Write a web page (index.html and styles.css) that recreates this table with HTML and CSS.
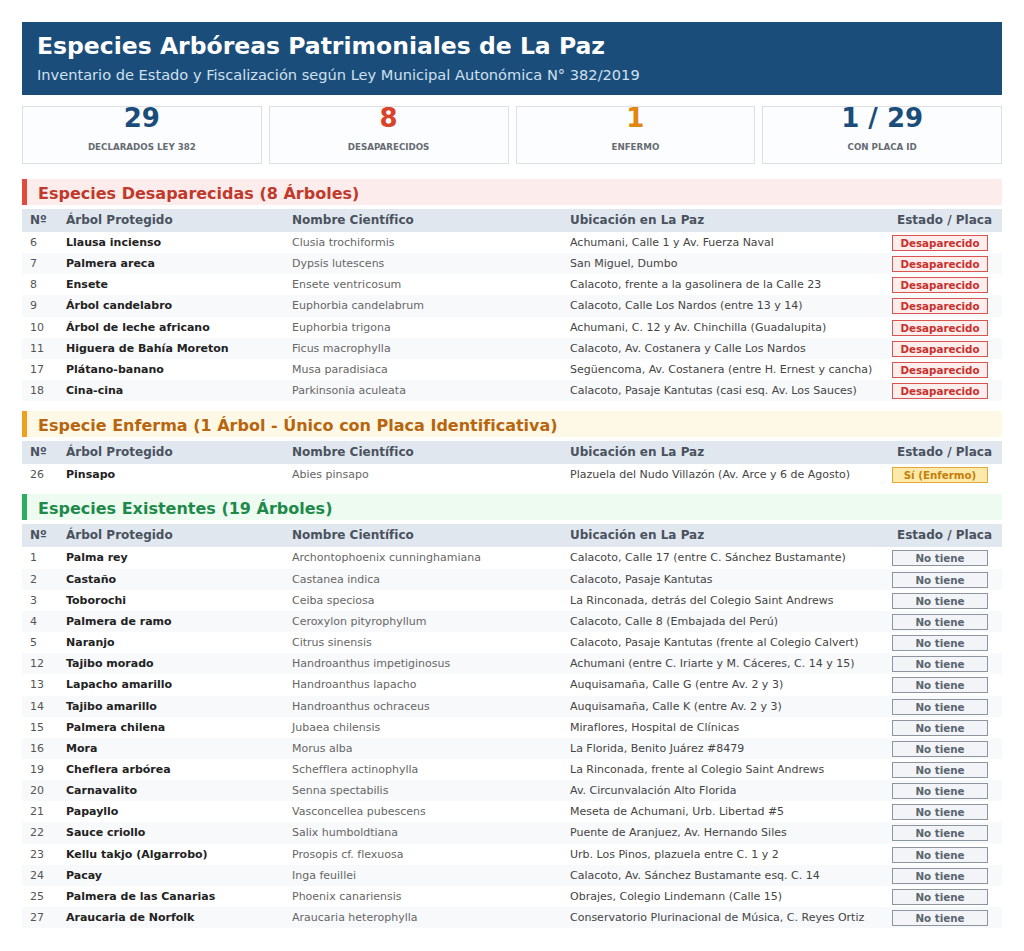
FILE: index.html
```html
<!DOCTYPE html>
<html lang="es">
<head>
<meta charset="utf-8">
<title>Especies Arbóreas Patrimoniales de La Paz</title>
<link rel="stylesheet" href="styles.css">
</head>
<body>
<div class="page">
  <header class="masthead">
    <h1 class="masthead-title">Especies Arbóreas Patrimoniales de La Paz</h1>
    <p class="masthead-sub">Inventario de Estado y Fiscalización según Ley Municipal Autonómica N° 382/2019</p>
  </header>

  <div class="stats">
    <div class="stat"><div class="stat-num num-blue">29</div><div class="stat-label">Declarados Ley 382</div></div>
    <div class="stat"><div class="stat-num num-red">8</div><div class="stat-label">Desaparecidos</div></div>
    <div class="stat"><div class="stat-num num-orange">1</div><div class="stat-label">Enfermo</div></div>
    <div class="stat"><div class="stat-num num-blue">1 / 29</div><div class="stat-label">Con Placa ID</div></div>
  </div>

  <section class="group">
    <h2 class="group-title title-red">Especies Desaparecidas (8 Árboles)</h2>
    <table class="trees">
      <colgroup><col class="c-num"><col class="c-name"><col class="c-sci"><col class="c-loc"><col class="c-state"></colgroup>
      <thead><tr><th>Nº</th><th>Árbol Protegido</th><th>Nombre Científico</th><th>Ubicación en La Paz</th><th class="th-state">Estado / Placa</th></tr></thead>
      <tbody>
        <tr><td class="num">6</td><td class="name">Llausa incienso</td><td class="sci">Clusia trochiformis</td><td class="loc">Achumani, Calle 1 y Av. Fuerza Naval</td><td class="state"><span class="badge b-red">Desaparecido</span></td></tr>
        <tr><td class="num">7</td><td class="name">Palmera areca</td><td class="sci">Dypsis lutescens</td><td class="loc">San Miguel, Dumbo</td><td class="state"><span class="badge b-red">Desaparecido</span></td></tr>
        <tr><td class="num">8</td><td class="name">Ensete</td><td class="sci">Ensete ventricosum</td><td class="loc">Calacoto, frente a la gasolinera de la Calle 23</td><td class="state"><span class="badge b-red">Desaparecido</span></td></tr>
        <tr><td class="num">9</td><td class="name">Árbol candelabro</td><td class="sci">Euphorbia candelabrum</td><td class="loc">Calacoto, Calle Los Nardos (entre 13 y 14)</td><td class="state"><span class="badge b-red">Desaparecido</span></td></tr>
        <tr><td class="num">10</td><td class="name">Árbol de leche africano</td><td class="sci">Euphorbia trigona</td><td class="loc">Achumani, C. 12 y Av. Chinchilla (Guadalupita)</td><td class="state"><span class="badge b-red">Desaparecido</span></td></tr>
        <tr><td class="num">11</td><td class="name">Higuera de Bahía Moreton</td><td class="sci">Ficus macrophylla</td><td class="loc">Calacoto, Av. Costanera y Calle Los Nardos</td><td class="state"><span class="badge b-red">Desaparecido</span></td></tr>
        <tr><td class="num">17</td><td class="name">Plátano-banano</td><td class="sci">Musa paradisiaca</td><td class="loc">Següencoma, Av. Costanera (entre H. Ernest y cancha)</td><td class="state"><span class="badge b-red">Desaparecido</span></td></tr>
        <tr><td class="num">18</td><td class="name">Cina-cina</td><td class="sci">Parkinsonia aculeata</td><td class="loc">Calacoto, Pasaje Kantutas (casi esq. Av. Los Sauces)</td><td class="state"><span class="badge b-red">Desaparecido</span></td></tr>
      </tbody>
    </table>
  </section>

  <section class="group">
    <h2 class="group-title title-orange">Especie Enferma (1 Árbol - Único con Placa Identificativa)</h2>
    <table class="trees">
      <colgroup><col class="c-num"><col class="c-name"><col class="c-sci"><col class="c-loc"><col class="c-state"></colgroup>
      <thead><tr><th>Nº</th><th>Árbol Protegido</th><th>Nombre Científico</th><th>Ubicación en La Paz</th><th class="th-state">Estado / Placa</th></tr></thead>
      <tbody>
        <tr><td class="num">26</td><td class="name">Pinsapo</td><td class="sci">Abies pinsapo</td><td class="loc">Plazuela del Nudo Villazón (Av. Arce y 6 de Agosto)</td><td class="state"><span class="badge b-yellow">Sí (Enfermo)</span></td></tr>
      </tbody>
    </table>
  </section>

  <section class="group">
    <h2 class="group-title title-green">Especies Existentes (19 Árboles)</h2>
    <table class="trees">
      <colgroup><col class="c-num"><col class="c-name"><col class="c-sci"><col class="c-loc"><col class="c-state"></colgroup>
      <thead><tr><th>Nº</th><th>Árbol Protegido</th><th>Nombre Científico</th><th>Ubicación en La Paz</th><th class="th-state">Estado / Placa</th></tr></thead>
      <tbody>
        <tr><td class="num">1</td><td class="name">Palma rey</td><td class="sci">Archontophoenix cunninghamiana</td><td class="loc">Calacoto, Calle 17 (entre C. Sánchez Bustamante)</td><td class="state"><span class="badge b-gray">No tiene</span></td></tr>
        <tr><td class="num">2</td><td class="name">Castaño</td><td class="sci">Castanea indica</td><td class="loc">Calacoto, Pasaje Kantutas</td><td class="state"><span class="badge b-gray">No tiene</span></td></tr>
        <tr><td class="num">3</td><td class="name">Toborochi</td><td class="sci">Ceiba speciosa</td><td class="loc">La Rinconada, detrás del Colegio Saint Andrews</td><td class="state"><span class="badge b-gray">No tiene</span></td></tr>
        <tr><td class="num">4</td><td class="name">Palmera de ramo</td><td class="sci">Ceroxylon pityrophyllum</td><td class="loc">Calacoto, Calle 8 (Embajada del Perú)</td><td class="state"><span class="badge b-gray">No tiene</span></td></tr>
        <tr><td class="num">5</td><td class="name">Naranjo</td><td class="sci">Citrus sinensis</td><td class="loc">Calacoto, Pasaje Kantutas (frente al Colegio Calvert)</td><td class="state"><span class="badge b-gray">No tiene</span></td></tr>
        <tr><td class="num">12</td><td class="name">Tajibo morado</td><td class="sci">Handroanthus impetiginosus</td><td class="loc">Achumani (entre C. Iriarte y M. Cáceres, C. 14 y 15)</td><td class="state"><span class="badge b-gray">No tiene</span></td></tr>
        <tr><td class="num">13</td><td class="name">Lapacho amarillo</td><td class="sci">Handroanthus lapacho</td><td class="loc">Auquisamaña, Calle G (entre Av. 2 y 3)</td><td class="state"><span class="badge b-gray">No tiene</span></td></tr>
        <tr><td class="num">14</td><td class="name">Tajibo amarillo</td><td class="sci">Handroanthus ochraceus</td><td class="loc">Auquisamaña, Calle K (entre Av. 2 y 3)</td><td class="state"><span class="badge b-gray">No tiene</span></td></tr>
        <tr><td class="num">15</td><td class="name">Palmera chilena</td><td class="sci">Jubaea chilensis</td><td class="loc">Miraflores, Hospital de Clínicas</td><td class="state"><span class="badge b-gray">No tiene</span></td></tr>
        <tr><td class="num">16</td><td class="name">Mora</td><td class="sci">Morus alba</td><td class="loc">La Florida, Benito Juárez #8479</td><td class="state"><span class="badge b-gray">No tiene</span></td></tr>
        <tr><td class="num">19</td><td class="name">Cheflera arbórea</td><td class="sci">Schefflera actinophylla</td><td class="loc">La Rinconada, frente al Colegio Saint Andrews</td><td class="state"><span class="badge b-gray">No tiene</span></td></tr>
        <tr><td class="num">20</td><td class="name">Carnavalito</td><td class="sci">Senna spectabilis</td><td class="loc">Av. Circunvalación Alto Florida</td><td class="state"><span class="badge b-gray">No tiene</span></td></tr>
        <tr><td class="num">21</td><td class="name">Papayllo</td><td class="sci">Vasconcellea pubescens</td><td class="loc">Meseta de Achumani, Urb. Libertad #5</td><td class="state"><span class="badge b-gray">No tiene</span></td></tr>
        <tr><td class="num">22</td><td class="name">Sauce criollo</td><td class="sci">Salix humboldtiana</td><td class="loc">Puente de Aranjuez, Av. Hernando Siles</td><td class="state"><span class="badge b-gray">No tiene</span></td></tr>
        <tr><td class="num">23</td><td class="name">Kellu takjo (Algarrobo)</td><td class="sci">Prosopis cf. flexuosa</td><td class="loc">Urb. Los Pinos, plazuela entre C. 1 y 2</td><td class="state"><span class="badge b-gray">No tiene</span></td></tr>
        <tr><td class="num">24</td><td class="name">Pacay</td><td class="sci">Inga feuillei</td><td class="loc">Calacoto, Av. Sánchez Bustamante esq. C. 14</td><td class="state"><span class="badge b-gray">No tiene</span></td></tr>
        <tr><td class="num">25</td><td class="name">Palmera de las Canarias</td><td class="sci">Phoenix canariensis</td><td class="loc">Obrajes, Colegio Lindemann (Calle 15)</td><td class="state"><span class="badge b-gray">No tiene</span></td></tr>
        <tr><td class="num">27</td><td class="name">Araucaria de Norfolk</td><td class="sci">Araucaria heterophylla</td><td class="loc">Conservatorio Plurinacional de Música, C. Reyes Ortiz</td><td class="state"><span class="badge b-gray">No tiene</span></td></tr>
      </tbody>
    </table>
  </section>
</div>
</body>
</html>
```

FILE: styles.css
```css
* { box-sizing: border-box; }

html, body {
  margin: 0;
  padding: 0;
  background: #ffffff;
}

body {
  font-family: "DejaVu Sans", Verdana, sans-serif;
  color: #333;
}

.page {
  padding: 22px 22px 0 22px;
}

/* Masthead */
.masthead {
  background: #1b4d7a;
  padding: 10px 15px 10px 15px;
  height: 73px;
}

.masthead-title {
  margin: 0;
  font-size: 23.5px;
  line-height: 29px;
  font-weight: bold;
  color: #ffffff;
}

.masthead-sub {
  margin: 5px 0 0 0;
  font-size: 14.6px;
  line-height: 18px;
  color: #cfe0f0;
}

/* Stat cards */
.stats {
  display: grid;
  grid-template-columns: repeat(4, 1fr);
  gap: 7px;
  margin-top: 11px;
  margin-bottom: 15px;
}

.stat {
  border: 1px solid #dde1e6;
  background: #fcfdfe;
  height: 58px;
  text-align: center;
}

.stat-num {
  margin-top: -2px;
  font-size: 26px;
  line-height: 26px;
  font-weight: bold;
}

.num-blue { color: #1b4d7a; }
.num-red { color: #d9432a; }
.num-orange { color: #e0870f; }

.stat-label {
  margin-top: 10px;
  font-size: 8.7px;
  line-height: 12px;
  font-weight: bold;
  text-transform: uppercase;
  color: #666b72;
}

/* Groups */
.group {
  margin-bottom: 9.5px;
}

.group-title {
  margin: 0 0 4px 0;
  height: 26px;
  padding: 3px 0 0 11px;
  font-size: 16px;
  line-height: 23px;
  font-weight: bold;
  border-left: 5px solid;
}

.title-red {
  color: #c0392b;
  background: #fdecec;
  border-left-color: #e04b3c;
}

.title-orange {
  color: #b8650f;
  background: #fef8e7;
  border-left-color: #f0a021;
}

.title-green {
  color: #1e8a4a;
  background: #edfbf1;
  border-left-color: #27ae60;
}

/* Tables */
.trees {
  width: 100%;
  border-collapse: collapse;
  table-layout: fixed;
}

.c-num { width: 36px; }
.c-name { width: 226px; }
.c-sci { width: 278px; }
.c-loc { width: 320px; }
.c-state { width: 120px; }

.trees th {
  background: #e1e7ef;
  color: #4a525e;
  font-size: 12px;
  line-height: 23px;
  height: 23px;
  font-weight: bold;
  text-align: left;
  padding: 0 0 0 8px;
  white-space: nowrap;
}

.trees th.th-state {
  text-align: right;
  padding: 0 10px 0 0;
}

.trees td {
  font-size: 11px;
  line-height: 21.15px;
  height: 21.15px;
  padding: 0 0 0 8px;
  white-space: nowrap;
  vertical-align: middle;
}

.trees tbody tr:nth-child(even) td {
  background: #f8f9fb;
}

.trees td.num { color: #555; }
.trees td.name { color: #222; font-weight: bold; }
.trees td.sci { color: #666; }
.trees td.loc { color: #444; }

.trees td.state {
  text-align: right;
  padding: 0 14px 0 0;
}

.badge {
  display: inline-block;
  width: 96px;
  height: 16px;
  line-height: 14px;
  font-size: 10.3px;
  font-weight: bold;
  text-align: center;
  vertical-align: middle;
  border: 1px solid;
}

.b-red {
  color: #c9302c;
  background: #fdeeee;
  border-color: #d9534f;
}

.b-yellow {
  color: #c47f0a;
  background: #fde9a9;
  border-color: #e2a83c;
}

.b-gray {
  color: #5a6470;
  background: #f2f4f7;
  border-color: #8d96a0;
}
```
